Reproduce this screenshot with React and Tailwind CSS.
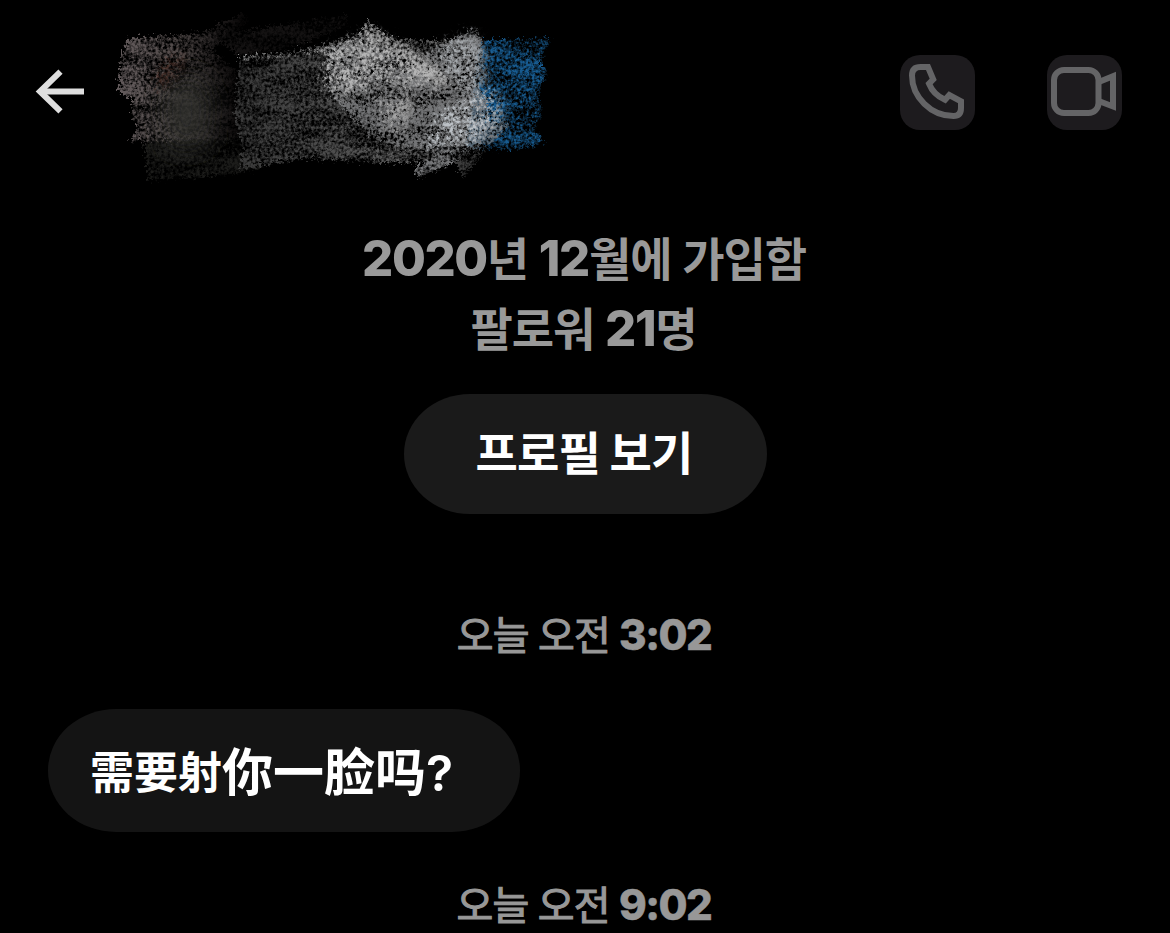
import React from 'react';

const KR = "font-['Noto_Sans_CJK_KR',sans-serif]";

const Digits = ({ children, className = 'text-[49px] tracking-[-1.4px]' }) => (
  <span className={`font-['Inter',sans-serif] font-extrabold ${className}`}>{children}</span>
);

const BackArrow = () => (
  <svg className="w-[50px] h-[46px]" viewBox="0 0 50 46" fill="none" stroke="#dedede" strokeWidth="6">
    <path d="M49 23.500H5" />
    <path d="M25.500 3.700 5 23.500 25.500 43.300" />
  </svg>
);

const PhoneIcon = () => (
  <svg className="size-[75px]" viewBox="0 0 75 75" fill="none" stroke="#646466" strokeWidth="6">
    <path d="M28 12H20.500Q12 12 12 20.500C12 42 31 61 53.500 61Q61 61 61 53V46.300L49.300 40L45 44.800Q33.500 40 29 28.700L33.200 24.300Z" />
  </svg>
);

const VideoIcon = () => (
  <svg className="size-[75px]" viewBox="0 0 75 75" fill="none" stroke="#646466" strokeWidth="6">
    <rect x="7" y="15" width="44.500" height="43" rx="10" />
    <path d="M53 26.500 66 21.300V51.500L53 46.500" />
  </svg>
);

// Chalk strokes covering the avatar and the name
const Scribble = () => (
  <svg className="w-[450px] h-[186px]" viewBox="110 0 450 186">
    <defs>
      <filter id="chalk" x="-10%" y="-10%" width="120%" height="120%" colorInterpolationFilters="sRGB">
        <feTurbulence type="fractalNoise" baseFrequency="0.34" numOctaves="4" seed="4" result="fine" />
        <feColorMatrix in="fine" type="matrix" values="1 0 0 0 0  0 1 0 0 0  0 0 1 0 0  0 0 0 0 1" result="fineSolid" />
        <feTurbulence type="fractalNoise" baseFrequency="0.02 0.07" numOctaves="4" seed="21" result="coarse" />
        <feColorMatrix in="coarse" type="matrix" values="1 0 0 0 0  0 0 0 0 0  0 1 0 0 0  0 0 0 0 1" result="coarseSolid" />
        <feComposite in="fineSolid" in2="coarseSolid" operator="arithmetic" k2="0.62" k3="0.38" result="mix" />
        <feColorMatrix in="mix" type="matrix" values="0 0 0 0 1  0 0 0 0 1  0 0 0 0 1  3.6 0.8 0 0 -1.55" result="grain" />
        <feDisplacementMap in="SourceGraphic" in2="fineSolid" scale="14" xChannelSelector="R" yChannelSelector="G" result="rough" />
        <feComposite in="rough" in2="grain" operator="in" result="chalked" />
        <feGaussianBlur in="chalked" stdDeviation="0.5" />
      </filter>
      <filter id="chalkSoft" x="-10%" y="-10%" width="120%" height="120%" colorInterpolationFilters="sRGB">
        <feTurbulence type="fractalNoise" baseFrequency="0.3" numOctaves="4" seed="12" result="fine" />
        <feColorMatrix in="fine" type="matrix" values="1 0 0 0 0  0 1 0 0 0  0 0 1 0 0  0 0 0 0 1" result="fineSolid" />
        <feTurbulence type="fractalNoise" baseFrequency="0.05" numOctaves="4" seed="33" result="coarse" />
        <feColorMatrix in="coarse" type="matrix" values="1 0 0 0 0  0 0 0 0 0  0 1 0 0 0  0 0 0 0 1" result="coarseSolid" />
        <feComposite in="fineSolid" in2="coarseSolid" operator="arithmetic" k2="0.65" k3="0.35" result="mix" />
        <feColorMatrix in="mix" type="matrix" values="0 0 0 0 1  0 0 0 0 1  0 0 0 0 1  4 0.8 0 0 -1.85" result="grain" />
        <feGaussianBlur in="SourceGraphic" stdDeviation="4" result="soft" />
        <feDisplacementMap in="soft" in2="fineSolid" scale="26" xChannelSelector="R" yChannelSelector="G" result="rough" />
        <feComposite in="rough" in2="grain" operator="in" result="chalked" />
        <feGaussianBlur in="chalked" stdDeviation="0.5" />
      </filter>
      <filter id="smudge" x="-30%" y="-30%" width="160%" height="160%">
        <feGaussianBlur stdDeviation="13" />
      </filter>
      <linearGradient id="avatar" gradientUnits="userSpaceOnUse" x1="120" y1="0" x2="245" y2="0">
        <stop offset="0" stopColor="#625a5b" />
        <stop offset="0.5" stopColor="#504948" />
        <stop offset="0.75" stopColor="#282424" />
        <stop offset="1" stopColor="#0a0808" />
      </linearGradient>
      <linearGradient id="name" gradientUnits="userSpaceOnUse" x1="240" y1="0" x2="500" y2="0">
        <stop offset="0" stopColor="#3a3a3a" />
        <stop offset="0.35" stopColor="#4c4c4c" />
        <stop offset="1" stopColor="#777777" />
      </linearGradient>
    </defs>

    {/* avatar */}
    <g filter="url(#chalk)">
      <path d="M127 39 203 33 243 13 249 21 212 50 236 70 240 142 130 142 138 126 132 112 133 98 118 92 122 60Z" fill="url(#avatar)" />
      <path d="M145 142 238 138 262 168 225 175 148 181Z" fill="#1c1c1a" />
      <path d="M215 36 348 15 349 24 300 46 240 56Z" fill="#141212" />
    </g>
    <path d="M165 85Q180 75 202 75L212 100 208 146 168 150 160 110Z" fill="#33312e" opacity="0.85" filter="url(#smudge)" />
    <path d="M153 90Q158 62 186 52L180 76 162 88Z" fill="#7a493c" opacity="0.45" filter="url(#chalkSoft)" />

    {/* name */}
    <g filter="url(#chalk)">
      <path d="M240 57 300 50 345 40 480 40 485 146 415 163 360 162 300 158 240 170 243 150 235 110Z" fill="url(#name)" />
      <path d="M240 57 320 49 330 47 330 51 240 61Z" fill="#8a8a8a" />
      <path d="M456 160 488 150 462 178Z" fill="#3c3c3c" />
    </g>

    {/* badge */}
    <g filter="url(#chalk)">
      <path d="M480 41 551 38 546 50 540 61 547 72 538 94 542 105 540 120 534 130 546 142 518 150 466 148Z" fill="#124b77" />
      <path d="M480 41 551 38 546 50 540 61 547 72 538 94 542 105 540 120 534 130 546 142 518 150 466 148Z" fill="#1a629b" opacity="0.7" />
    </g>

    {/* bright strokes */}
    <g filter="url(#chalk)">
      <path d="M328 50 362 34 366 21 422 56 475 28 483 42 485 62 480 88 489 104 484 120 512 124 490 145 455 162 418 178 414 170 438 152 402 147 372 138 330 92Z" fill="#747577" />
      <path d="M366 21 425 58 452 82 446 90 410 66 362 34Z" fill="#949494" />
    </g>
    <g filter="url(#chalkSoft)">
      <path d="M328 52 370 32 420 56 456 78 440 92 400 84 374 90 340 98 326 84Z" fill="#b4b4b4" />
      <path d="M440 50 474 32 488 60 486 88 464 98 446 70Z" fill="#a5a9ad" />
      <path d="M442 112 498 90 508 118 482 142 428 152Z" fill="#bcc1c6" />
      <path d="M380 90 416 98 408 136 384 128Z" fill="#a4a4a4" />
    </g>
  </svg>
);

const IconButton = ({ label, children }) => (
  <button aria-label={label} className="size-[75px] rounded-[20px] bg-[#1d1b1e]">
    {children}
  </button>
);

const Header = () => (
  <header className="h-[186px] shrink-0 flex items-start">
    <button aria-label="back" className="ml-[35px] mt-[68px]">
      <BackArrow />
    </button>
    <div className="ml-[25px]">
      <Scribble />
    </div>
    <div className="ml-auto mr-12 mt-[55px] flex gap-[72px]">
      <IconButton label="call">
        <PhoneIcon />
      </IconButton>
      <IconButton label="video">
        <VideoIcon />
      </IconButton>
    </div>
  </header>
);

const TimeLabel = ({ time }) => (
  <p className={`${KR} h-[60px] pr-[2px] text-center text-[40px] leading-[60px] font-normal [-webkit-text-stroke:1.1px_#979797] tracking-[-0.8px] [word-spacing:1px] text-[#979797] whitespace-nowrap`}>
    오늘 오전 <Digits className="text-[42px] tracking-[-1.5px] [-webkit-text-stroke:0.5px_#979797]">{time}</Digits>
  </p>
);

export default function App() {
  return (
    <main className="w-[1170px] h-[933px] overflow-hidden bg-black flex flex-col">
      <Header />

      <section className={`${KR} mt-[35px] shrink-0 flex flex-col items-center text-[46px] leading-[70px] font-bold tracking-[-1.1px] [word-spacing:1.5px] text-[#999999] whitespace-nowrap`}>
        <p className="h-[70px] pr-[2px]">
          <Digits>2020</Digits>년 <Digits>12</Digits>월에 가입함
        </p>
        <p className="h-[70px] pr-[3px]">
          팔로워 <Digits>21</Digits>명
        </p>
        <button className="mt-[33px] w-[363px] h-[120px] pb-[8px] pr-[2px] rounded-[66px/60px] bg-[#1a1a1a] text-white tracking-[-0.8px]">프로필 보기</button>
      </section>

      <div className="mt-[89px] shrink-0">
        <TimeLabel time="3:02" />
      </div>

      <div className="mt-[46px] ml-12 w-[472px] h-[123px] shrink-0 pl-[42px] flex items-center rounded-[68px/61px] bg-[#141414]">
        <p className="font-['Noto_Sans_CJK_SC',sans-serif] font-bold text-white whitespace-nowrap leading-none">
          <span className="text-[44px] align-[2px]">需要射</span>
          <span className="text-[51px]">你一脸吗</span>
          <span className="font-['Inter',sans-serif] font-semibold text-[50px]">?</span>
        </p>
      </div>

      <div className="mt-[41px] shrink-0">
        <TimeLabel time="9:02" />
      </div>
    </main>
  );
}
